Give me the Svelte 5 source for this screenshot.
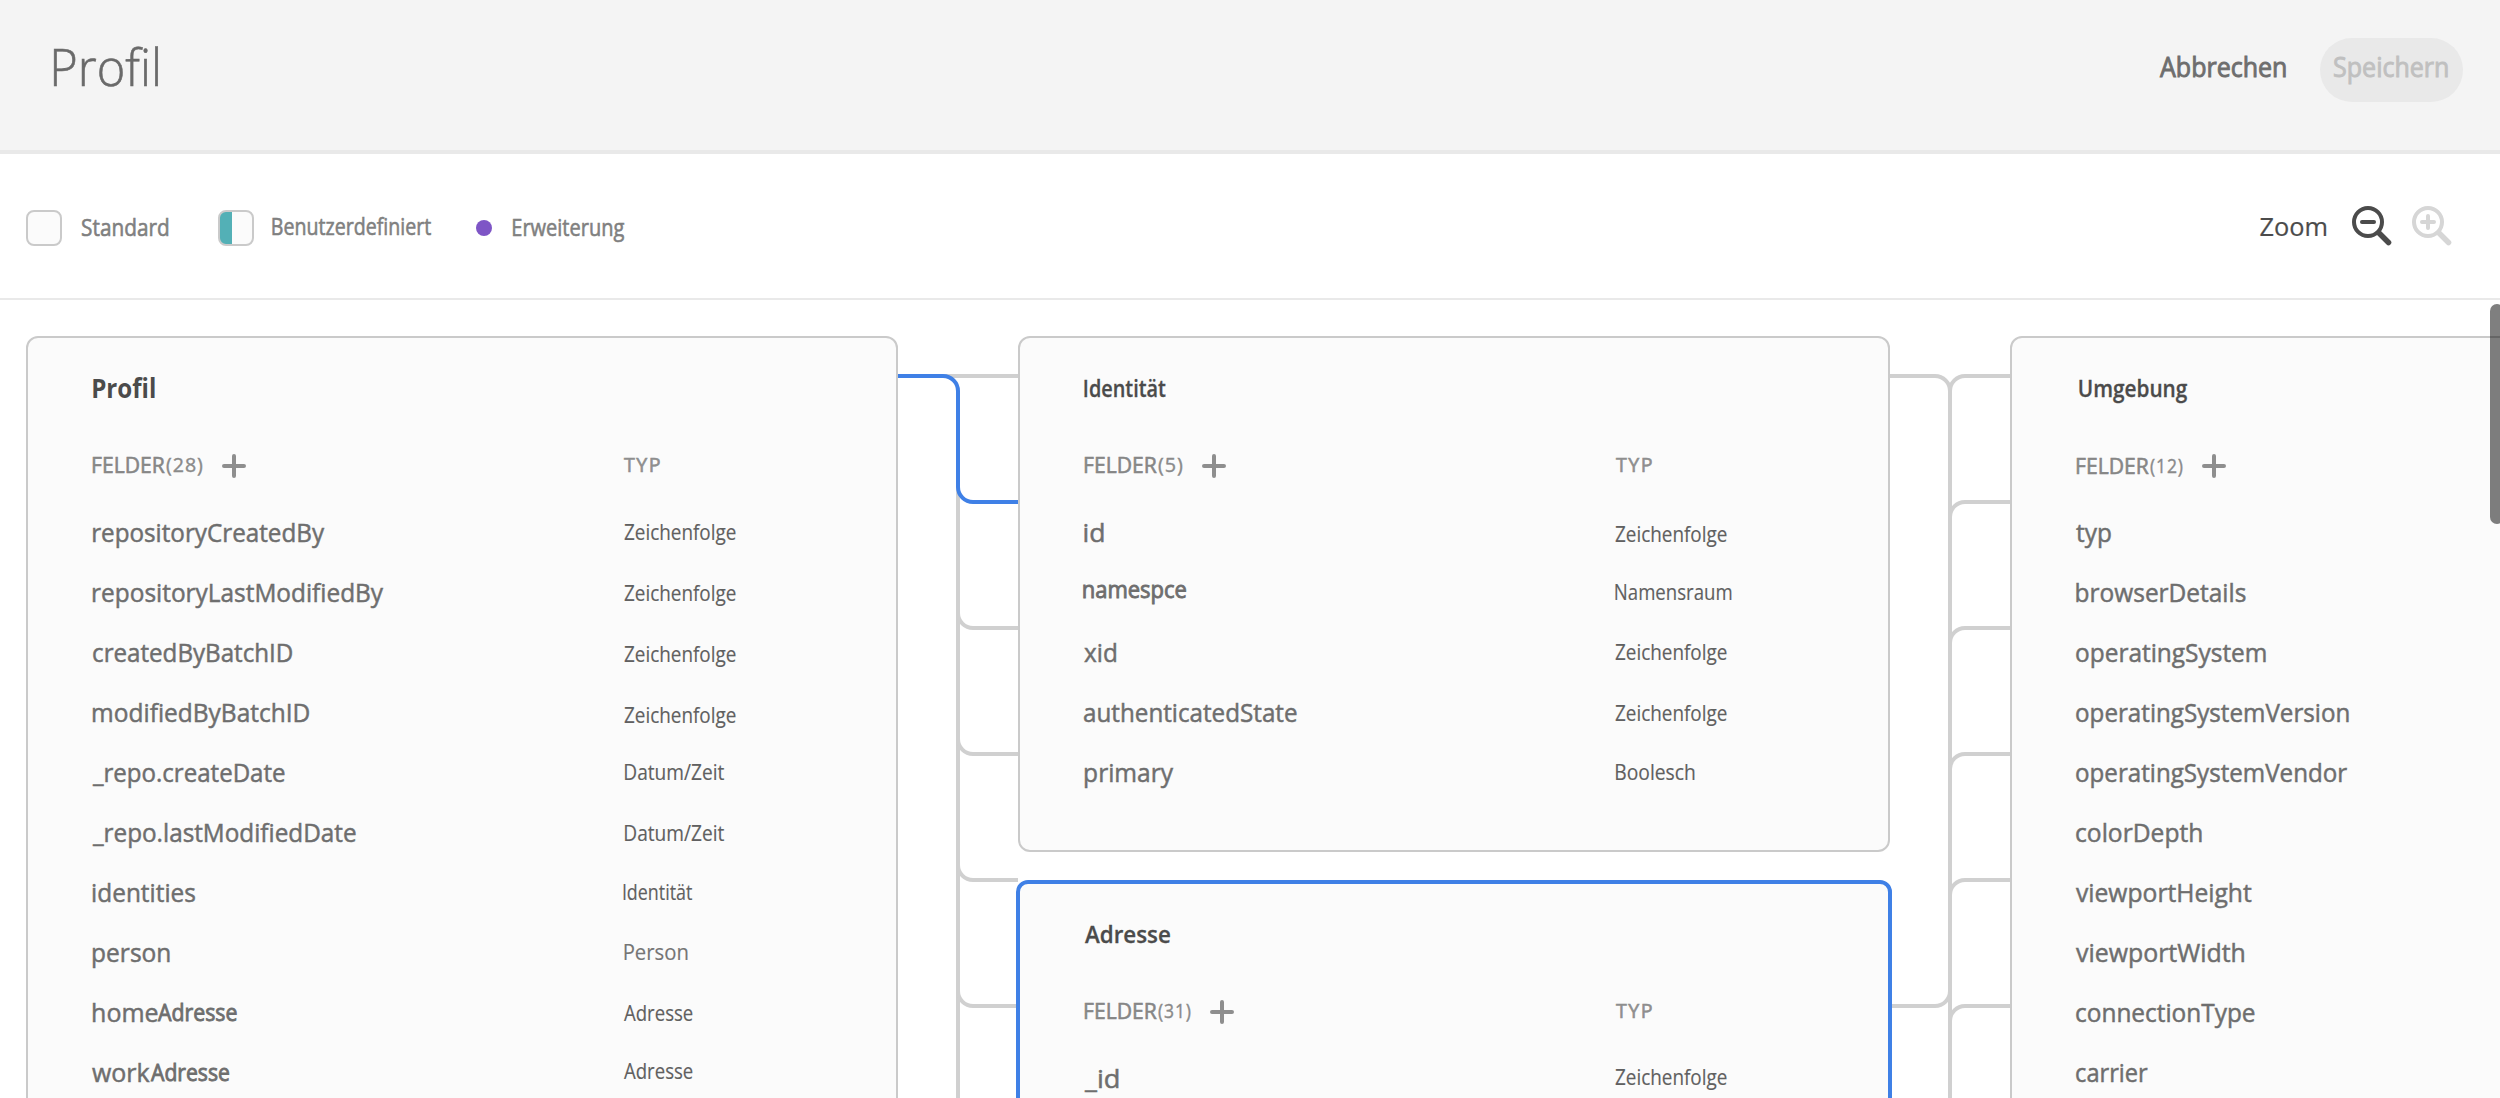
<script>
  const Z = { t: 'Zeichenfolge', w: 112 };
  const D = { t: 'Datum/Zeit', w: 99.5, dx: 1 };

  const cards = {
    profile: {
      title: { t: 'Profil', w: 61.5, dx: 0 },
      count: { t: '(28)', w: 37 },
      typed: true,
      rows: [
        { n: [{ t: 'repositoryCreatedBy', w: 232 }], y: { ...Z, dy: -1 } },
        { n: [{ t: 'repositoryLastModifiedBy', w: 291 }], y: { ...Z, dy: -0.5 } },
        { n: [{ t: 'createdByBatchID', w: 199.5 }], y: { ...Z, dy: 0.5 } },
        { n: [{ t: 'modifiedByBatchID', w: 216.5 }], y: { ...Z, dy: 1.5 } },
        { n: [{ t: '_repo.createDate', w: 193, dx: -1 }], y: { ...D, dy: -1 } },
        { n: [{ t: '_repo.lastModifiedDate', w: 264, dx: -1 }], y: { ...D, dy: 0 } },
        { n: [{ t: 'identities', w: 102.5 }], y: { t: 'Identität', w: 69, dx: -0.5, dy: -1.5 } },
        { n: [{ t: 'person', w: 76.5 }], y: { t: 'Person', w: 63, dx: 0.5, dy: -1.5, soft: true } },
        { n: [{ t: 'home', w: 65 }, { t: 'Adresse', w: 79, small: true }], y: { t: 'Adresse', w: 69, dy: -0.5 } },
        { n: [{ t: 'work', w: 58, dx: -1 }, { t: 'Adresse', w: 78.5, small: true }], y: { t: 'Adresse', w: 69, dy: -2.5 } }
      ]
    },
    identity: {
      title: { t: 'Identität', w: 81, dx: -0.5, small: true },
      count: { t: '(5)', w: 25 },
      typed: true,
      rows: [
        { n: [{ t: 'id', w: 19, dx: -0.5 }], y: { ...Z, dx: -1, dy: 0.5 } },
        { n: [{ t: 'namespce', w: 103, dx: -1.5, dy: -2.5, small: true }], y: { t: 'Namensraum', w: 116, dx: -0.5, dy: -1 } },
        { n: [{ t: 'xid', w: 32, dx: -1 }], y: { ...Z, dx: -1, dy: -1 } },
        { n: [{ t: 'authenticatedState', w: 213, dx: -1 }], y: { ...Z, dx: -1, dy: -0.5 } },
        { n: [{ t: 'primary', w: 89 }], y: { t: 'Boolesch', w: 78.5, dy: -1 } }
      ]
    },
    address: {
      title: { t: 'Adresse', w: 85, dx: 0, small: true },
      count: { t: '(31)', w: 33 },
      typed: true,
      rows: [{ n: [{ t: '_id', w: 34.5, dx: -1 }], y: { ...Z, dx: -1, dy: -2 } }]
    },
    environment: {
      title: { t: 'Umgebung', w: 107.5, dx: 2.5, dy: -0.5, small: true },
      count: { t: '(12)', w: 33 },
      headDy: 1,
      typed: false,
      rows: [
        { n: [{ t: 'typ', w: 35, dx: -1 }] },
        { n: [{ t: 'browserDetails', w: 169.5, dx: -0.5 }] },
        { n: [{ t: 'operatingSystem', w: 189.5, dx: -1 }] },
        { n: [{ t: 'operatingSystemVersion', w: 272.5, dx: -1 }] },
        { n: [{ t: 'operatingSystemVendor', w: 271.5, dx: -1 }] },
        { n: [{ t: 'colorDepth', w: 125.5, dx: -1 }] },
        { n: [{ t: 'viewportHeight', w: 175.5, dx: -1 }] },
        { n: [{ t: 'viewportWidth', w: 168, dx: -1 }] },
        { n: [{ t: 'connectionType', w: 179, dx: -1 }] },
        { n: [{ t: 'carrier', w: 72, dx: -1 }] }
      ]
    }
  };

  const branches = [0, 1, 2, 3, 4, 5].map((i) => 40 + i * 126);

  // Condenses a label so that its visible ink spans exactly the given width.
  function fit(node, { t, w, dx = 0, dy = 0 }) {
    const cs = getComputedStyle(node);
    const ctx = document.createElement('canvas').getContext('2d');
    ctx.font = `${cs.fontWeight} ${cs.fontSize} ${cs.fontFamily}`;
    const m = ctx.measureText(t);
    const left = -m.actualBoundingBoxLeft;
    const right = m.width - m.actualBoundingBoxRight + (parseFloat(cs.letterSpacing) || 0);
    const s = w / (node.getBoundingClientRect().width - left - right);
    node.style.transform = `translate(${dx - left * s}px, ${dy}px) scaleX(${s})`;
  }
</script>

{#snippet label(l, cls)}
  <span class="fit {cls}" style:width="{l.w}px"><span class="ink" use:fit={l}>{l.t}</span></span>
{/snippet}

{#snippet card(c, active)}
  <section class="card" class:active>
    <h2>{@render label(c.title, c.title.small ? 'title small' : 'title')}</h2>
    <div class="row head">
      <div class="cell name">
        {@render label({ t: 'FELDER', w: 72, dy: (c.headDy ?? 0) - 1 }, 'fields')}
        {@render label({ ...c.count, dy: (c.headDy ?? 0) - 1 }, 'count')}
        <svg class="plus" width="24" height="24" viewBox="0 0 24 24">
          <path d="M12 2v20M2 12h20" />
        </svg>
      </div>
      {#if c.typed}
        <div class="cell">{@render label({ t: 'TYP', w: 35.5, dy: -1 }, 'typ')}</div>
      {/if}
    </div>
    <div class="rows">
      {#each c.rows as r}
        <div class="row">
          <div class="cell name">
            {#each r.n as part}{@render label({ ...part, dy: (part.dy ?? 0) - 0.5 }, part.small ? 'field small' : 'field')}{/each}
          </div>
          {#if r.y}
            <div class="cell">{@render label(r.y, r.y.soft ? 'type soft' : 'type')}</div>
          {/if}
        </div>
      {/each}
    </div>
  </section>
{/snippet}

<div class="page">
  <header>
    <h1>{@render label({ t: 'Profil', w: 104.5, dx: 0, dy: -4 }, 'heading')}</h1>
    <div class="actions">
      <button class="cancel">{@render label({ t: 'Abbrechen', w: 126, dy: -3 }, 'action')}</button>
      <button class="save" disabled>{@render label({ t: 'Speichern', w: 114, dy: -3 }, 'action')}</button>
    </div>
  </header>

  <div class="toolbar">
    <div class="legend">
      <i class="swatch"></i>
      {@render label({ t: 'Standard', w: 86.5, dx: 0, dy: -1.3 }, 'key k1')}
      <i class="swatch custom"></i>
      {@render label({ t: 'Benutzerdefiniert', w: 158.5, dx: 0.5, dy: -2.3 }, 'key k2')}
      <i class="dot"></i>
      {@render label({ t: 'Erweiterung', w: 111.5, dx: 0, dy: -1.3 }, 'key k3')}
    </div>
    <div class="zoom">
      {@render label({ t: 'Zoom', w: 66.5, dx: -0.5 }, 'zoom-label')}
      <svg class="glass" width="40" height="40" viewBox="0 0 40 40">
        <circle cx="16" cy="16" r="14" />
        <path class="sign" d="M10 16h12" />
        <path class="handle" d="M27 27l9.5 9.5" />
      </svg>
      <svg class="glass off" width="40" height="40" viewBox="0 0 40 40">
        <circle cx="16" cy="16" r="14" />
        <path class="sign" d="M10 16h12M16 10v12" />
        <path class="handle" d="M27 27l9.5 9.5" />
      </svg>
    </div>
  </div>

  <main>
    <div class="column">{@render card(cards.profile, false)}</div>
    <svg class="gutter" width="120" height="762" viewBox="0 0 120 762">
      <path d="M40 40H120M60 100V770" />
      {#each branches.slice(2) as y}
        <path d="M60 {y - 15}a15 15 0 0 0 15 15H120" />
      {/each}
      <path class="selected" d="M0 40H45a15 15 0 0 1 15 15V151a15 15 0 0 0 15 15H120" />
    </svg>
    <div class="column">
      {@render card(cards.identity, false)}
      {@render card(cards.address, true)}
    </div>
    <svg class="gutter" width="120" height="762" viewBox="0 0 120 762">
      <path d="M0 40H45a15 15 0 0 1 15 15V770M0 670H45a15 15 0 0 0 15 -15" />
      {#each branches as y}
        <path d="M60 {y + 15}a15 15 0 0 1 15 -15H120" />
      {/each}
    </svg>
    <div class="column">{@render card(cards.environment, false)}</div>
    <div class="scrollbar"></div>
  </main>
</div>

<style>
  :global(body) {
    margin: 0;
    background: #fff;
  }
  .page {
    display: flex;
    flex-direction: column;
    width: 2500px;
    height: 1098px;
    overflow: hidden;
    background: #fff;
    font-family: 'Open Sans', 'Noto Sans', sans-serif;
    font-variant-ligatures: none;
    color: #707070;
  }
  h1,
  h2 {
    margin: 0;
    font: inherit;
  }
  svg {
    display: block;
    flex: none;
    fill: none;
  }
  .fit {
    display: block;
    flex: none;
    white-space: nowrap;
  }
  .ink {
    display: inline-block;
    transform-origin: 0 50%;
  }

  header {
    box-sizing: border-box;
    flex: none;
    display: flex;
    align-items: flex-start;
    justify-content: space-between;
    height: 154px;
    padding: 38px 37px 0 53.5px;
    background: #f4f4f4;
    border-bottom: 4px solid #e9e9e9;
  }
  h1,
  .actions {
    height: 64px;
    line-height: 64px;
  }
  .heading {
    font-size: 52px;
    font-weight: 300;
    color: #6a6a6a;
    -webkit-text-stroke: 0.6px;
  }
  .actions {
    display: flex;
    gap: 34px;
  }
  button {
    padding: 0;
    border: 0;
    background: none;
    font: inherit;
    line-height: 64px;
    text-align: left;
    color: #6e6e6e;
  }
  .action {
    font-size: 27px;
    -webkit-text-stroke: 0.9px;
  }
  .save {
    padding: 0 15px 0 14px;
    border-radius: 32px;
    background: #e9e9e9;
    color: #c0c0c0;
  }

  .toolbar {
    box-sizing: border-box;
    flex: none;
    display: flex;
    align-items: center;
    justify-content: space-between;
    height: 146px;
    padding: 0 48px 0 26px;
    border-bottom: 2px solid #e9e9e9;
  }
  .legend {
    display: flex;
    align-items: center;
    padding-top: 4px;
    line-height: 36px;
  }
  .swatch {
    box-sizing: border-box;
    width: 36px;
    height: 36px;
    border: 2px solid #cacaca;
    border-radius: 8px;
    background: #fbfbfb;
  }
  .custom {
    background: linear-gradient(90deg, #53b0b6 12px, #fbfbfb 12px);
  }
  .dot {
    width: 16px;
    height: 16px;
    border-radius: 50%;
    background: #7e55c6;
  }
  .key {
    font-size: 23.5px;
    color: #808080;
    -webkit-text-stroke: 0.6px;
  }
  .k1 {
    margin: 0 49.5px 0 20px;
  }
  .k2 {
    margin: 0 45.5px 0 18px;
  }
  .k3 {
    margin-left: 20.5px;
  }
  .zoom {
    display: flex;
    align-items: center;
    gap: 20px;
    line-height: 40px;
  }
  .zoom-label {
    margin-right: 5.5px;
    font-size: 26px;
    color: #4b4b4b;
    -webkit-text-stroke: 0.2px;
  }
  .glass {
    stroke: #4b4b4b;
    stroke-width: 4;
    stroke-linecap: round;
  }
  .glass .handle {
    stroke-width: 5.5;
  }
  .glass.off {
    stroke: #d6d6d6;
  }

  main {
    position: relative;
    flex: 1;
    display: flex;
    align-items: flex-start;
    min-height: 0;
    padding: 36px 0 0 26px;
    overflow: hidden;
  }
  .column {
    flex: none;
    display: flex;
    flex-direction: column;
    gap: 28px;
    width: 872px;
  }
  .card {
    box-sizing: border-box;
    padding: 30px 0 48px 65px;
    border: 2px solid #cacaca;
    border-radius: 12px;
    background: #fbfbfb;
  }
  .column:not(:nth-child(3)) .card,
  .card.active {
    min-height: 900px;
  }
  .card.active {
    z-index: 1;
    margin: 0 -2px;
    border: 4px solid #3f80e6;
  }
  .title {
    font-size: 26px;
    font-weight: 700;
    line-height: 40px;
    color: #4b4b4b;
  }
  .title.small {
    font-size: 24px;
    font-weight: 600;
    -webkit-text-stroke: 0.3px;
  }
  .row {
    display: flex;
    height: 60px;
    line-height: 60px;
  }
  .head {
    height: 40px;
    margin: 38px 0 16px;
    line-height: 40px;
  }
  .cell {
    display: flex;
    align-items: center;
  }
  .name {
    width: 530.5px;
  }
  .fields {
    margin-right: 1px;
    font-size: 22.5px;
    color: #868686;
    -webkit-text-stroke: 0.6px;
  }
  .count {
    margin-right: 19px;
    font-size: 20px;
    letter-spacing: 1px;
    color: #8a8a8a;
    -webkit-text-stroke: 0.4px;
  }
  .plus {
    stroke: #8e8e8e;
    stroke-width: 4;
    stroke-linecap: round;
  }
  .typ {
    font-size: 20px;
    letter-spacing: 1.5px;
    color: #8e8e8e;
    -webkit-text-stroke: 0.6px;
  }
  .field {
    font-size: 26px;
    color: #6e6e6e;
    -webkit-text-stroke: 0.5px;
  }
  .field.small {
    font-size: 24px;
    -webkit-text-stroke: 0.9px;
  }
  .type {
    font-size: 22px;
    color: #606060;
    -webkit-text-stroke: 0.15px;
  }
  .type.soft {
    color: #757575;
  }

  .gutter {
    overflow: visible;
    stroke: #d0d0d0;
    stroke-width: 4;
  }
  .selected {
    stroke: #3f80e6;
  }
  .scrollbar {
    position: absolute;
    top: 4px;
    right: -4px;
    width: 14px;
    height: 220px;
    border-radius: 7px;
    background: rgba(0, 0, 0, 0.5);
  }
</style>
